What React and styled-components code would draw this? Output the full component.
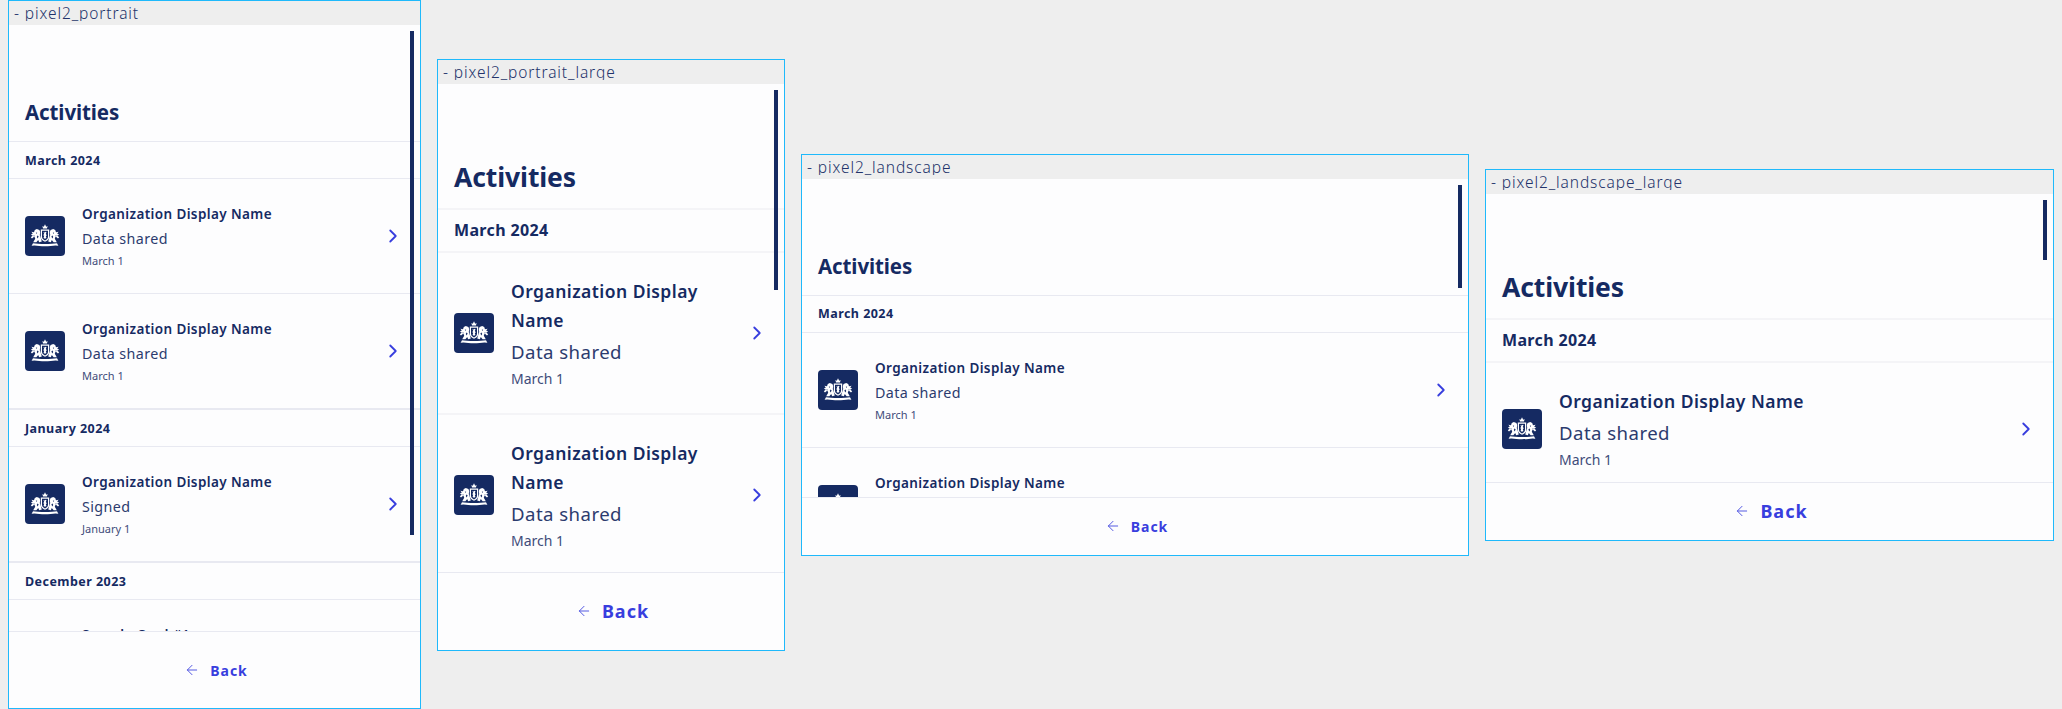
import React from 'react';
import styled, { createGlobalStyle, css } from 'styled-components';
import { ArrowLeft, ChevronRight } from 'lucide-react';

const GlobalStyle = createGlobalStyle`
  html, body {
    margin: 0;
    background: #eeeeee;
    font-family: "Noto Sans", "Open Sans", sans-serif;
    overflow: hidden;
  }
  * { box-sizing: border-box; }
`;

const navy = '#152a62';
const blue = '#383ede';

const Canvas = styled.div`
  height: 709px;
  padding: 0 8px;
  display: flex;
  align-items: center;
  gap: 16px;
`;

const Frame = styled.section`
  flex: none;
  width: ${(p) => p.$width + 2}px;
  border: 1px solid #1fb9fb;
  display: flex;
  flex-direction: column;
`;

const TitleBar = styled.div`
  height: 24px;
  padding-left: 5px;
  background: #eeeeee;
  overflow: hidden;
`;

const TitleText = styled.div`
  height: 20px;
  overflow: hidden;
  font-size: 15.5px;
  line-height: 24px;
  font-weight: 300;
  letter-spacing: 0.9px;
  color: #22326a;
`;

const Screen = styled.div`
  position: relative;
  height: ${(p) => p.$height}px;
  background: #fdfdfe;
  display: flex;
  flex-direction: column;
  overflow: hidden;
`;

const ScrollThumb = styled.div`
  position: absolute;
  top: 6px;
  right: 6px;
  width: 4px;
  height: ${(p) => p.$height}px;
  background: ${navy};
`;

const List = styled.div`
  flex: 1;
  min-height: 0;
  overflow: hidden;
`;

const Header = styled.header`
  height: ${(p) => (p.$large ? 126 : 117)}px;
  padding: 0 16px ${(p) => (p.$large ? 13 : 15)}px;
  display: flex;
  align-items: flex-end;
  border-bottom: ${(p) => (p.$large ? '2px solid #f4f4f7' : '1px solid #e8e9f1')};
`;

const Title = styled.h1`
  margin: 0;
  color: ${navy};
  font-weight: 700;
  font-size: ${(p) => (p.$large ? 26.5 : 20.5)}px;
  line-height: ${(p) => (p.$large ? 36 : 28)}px;
  letter-spacing: -0.1px;
`;

const Section = styled.div`
  ${(p) =>
    !p.$first &&
    css`
      border-top: 2px solid #e8e9f1;
    `}
`;

const SectionHeader = styled.div`
  height: ${(p) => (p.$large ? 43 : 37)}px;
  padding: 0 16px;
  display: flex;
  align-items: center;
  border-bottom: ${(p) => (p.$large ? '2px solid #f4f4f7' : '1px solid #e8e9f1')};
  color: ${navy};
  font-weight: 700;
  font-size: ${(p) => (p.$large ? 16 : 12.5)}px;
  letter-spacing: ${(p) => (p.$large ? 0.35 : 0.45)}px;
`;

const Row = styled.div`
  padding: ${(p) => (p.$large ? '24px 16px 23px' : '24px 16px')};
  display: flex;
  align-items: center;
  border-bottom: ${(p) => (p.$last ? 'none' : p.$large ? '2px solid #f4f4f7' : '1px solid #e8e9f1')};
`;

const LogoBox = styled.div`
  flex: none;
  width: 40px;
  height: 40px;
  border-radius: 4px;
  background: ${navy};
  display: flex;
  align-items: center;
  justify-content: center;
`;

const RowText = styled.div`
  flex: 1;
  min-width: 0;
  margin: 0 16px 0 17px;
`;

const Name = styled.div`
  color: ${navy};
  font-weight: 600;
  font-size: ${(p) => (p.$large ? 17.5 : 13.5)}px;
  line-height: ${(p) => (p.$large ? 29 : 22)}px;
  letter-spacing: ${(p) => (p.$large ? 0.45 : 0.39)}px;
`;

const Description = styled.div`
  color: #2c3b6e;
  font-weight: 400;
  font-size: ${(p) => (p.$large ? 18.6 : 14.3)}px;
  line-height: ${(p) => (p.$large ? 33 : 28)}px;
  letter-spacing: ${(p) => (p.$large ? 0.45 : 0.4)}px;
`;

const DateText = styled.div`
  color: #3f4c7a;
  font-weight: 400;
  font-size: ${(p) => (p.$large ? 14 : 11)}px;
  line-height: ${(p) => (p.$large ? 22 : 16)}px;
`;

const Chevron = styled(ChevronRight)`
  flex: none;
  color: ${blue};
`;

const Footer = styled.footer`
  flex: none;
  height: ${(p) => p.$height}px;
  padding-left: 3px;
  border-top: 1px solid #e8e9f1;
  display: flex;
  align-items: center;
  justify-content: center;
  gap: 10px;
  color: ${blue};
  font-weight: 700;
  font-size: ${(p) => (p.$large ? 18 : 14)}px;
  letter-spacing: 1px;
`;

const BackArrow = styled(ArrowLeft)`
  flex: none;
  opacity: 0.85;
`;

function Crest() {
  return (
    <svg width="30" height="26" viewBox="0 0 30 26" aria-hidden="true">
      <g fill="#fff">
        {/* crown */}
        <path d="M13 5.6 L12.4 3 L13.8 3.8 L15 1.2 L16.2 3.8 L17.6 3 L17 5.6 Z" />
        {/* shield */}
        <path d="M10.8 6.4 H19.2 V14 C19.2 16.6 17 18 15 18.8 C13 18 10.8 16.6 10.8 14 Z" />
        {/* left lion */}
        <path d="M6.8 6 L9.4 7 L10.2 9 L9.8 12 L10.8 15 L11.8 18.6 L9.2 19.2 L8.2 17 L6.4 19.2 L3.2 19.2 L5.2 15.8 L4.4 13.6 L2 15.6 L0.8 14.2 L2.8 12.6 L0.8 11.8 L2.8 10.6 L1.4 8.8 L4 9.2 L4.8 7 Z" />
        {/* right lion */}
        <path d="M23.2 6 L20.6 7 L19.8 9 L20.2 12 L19.2 15 L18.2 18.6 L20.8 19.2 L21.8 17 L23.6 19.2 L26.8 19.2 L24.8 15.8 L25.6 13.6 L28 15.6 L29.2 14.2 L27.2 12.6 L29.2 11.8 L27.2 10.6 L28.6 8.8 L26 9.2 L25.2 7 Z" />
        {/* ribbon */}
        <path d="M3 20.2 C8 21.2 22 21.2 27 20.2 L28.4 22.8 L25.4 22.4 C20 23.4 10 23.4 4.6 22.4 L1.6 22.8 Z" />
      </g>
      <g fill="#152a62">
        {/* shield field */}
        <path d="M12 7.8 H18 V13.8 C18 15.6 16.6 16.6 15 17.4 C13.4 16.6 12 15.6 12 13.8 Z" />
        {/* gaps in the lions */}
        <path d="M5.8 9.4 L7.2 9.8 L6.6 11 Z" />
        <path d="M24.2 9.4 L22.8 9.8 L23.4 11 Z" />
        <path d="M7.4 12.4 L8.6 13.2 L7.8 15.4 L6.8 14 Z" />
        <path d="M22.6 12.4 L21.4 13.2 L22.2 15.4 L23.2 14 Z" />
        <path d="M3.6 12.2 L4.6 12.6 L3.8 13.4 Z" />
        <path d="M26.4 12.2 L25.4 12.6 L26.2 13.4 Z" />
      </g>
      {/* lion on the shield */}
      <path
        fill="#fff"
        d="M13.4 9 L14.6 9.4 L15.4 8.8 L16.6 9.4 L15.8 10.8 L16.8 12.4 L15.8 13 L16.4 15 L15 15.8 L13.6 15 L14.2 12.8 L13.2 12.2 L14.2 10.8 Z"
      />
    </svg>
  );
}

const march = {
  label: 'March 2024',
  items: [
    { name: 'Organization Display Name', description: 'Data shared', date: 'March 1' },
    { name: 'Organization Display Name', description: 'Data shared', date: 'March 1' },
  ],
};

const january = {
  label: 'January 2024',
  items: [{ name: 'Organization Display Name', description: 'Signed', date: 'January 1' }],
};

const december = {
  label: 'December 2023',
  items: [{ name: 'Sample Card #1', description: 'Data shared', date: 'December 1' }],
};

const sections = [march, january, december];

const screens = [
  { title: 'pixel2_portrait', width: 411, height: 683, thumb: 504, footer: 77 },
  { title: 'pixel2_portrait_large', width: 346, height: 566, thumb: 200, footer: 78, large: true },
  { title: 'pixel2_landscape', width: 666, height: 376, thumb: 103, footer: 58 },
  { title: 'pixel2_landscape_large', width: 567, height: 346, thumb: 60, footer: 58, large: true },
];

function ActivityRow({ item, large, last }) {
  return (
    <Row $large={large} $last={last}>
      <LogoBox>
        <Crest />
      </LogoBox>
      <RowText>
        <Name $large={large}>{item.name}</Name>
        <Description $large={large}>{item.description}</Description>
        <DateText $large={large}>{item.date}</DateText>
      </RowText>
      <Chevron size={22} strokeWidth={2} />
    </Row>
  );
}

function ActivitiesScreen({ title, width, height, thumb, footer, large }) {
  return (
    <Frame $width={width}>
      <TitleBar>
        <TitleText>- {title}</TitleText>
      </TitleBar>
      <Screen $height={height}>
        <List>
          <Header $large={large}>
            <Title $large={large}>Activities</Title>
          </Header>
          {sections.map((section, index) => (
            <Section key={section.label} $first={index === 0}>
              <SectionHeader $large={large}>{section.label}</SectionHeader>
              {section.items.map((item, i) => (
                <ActivityRow key={i} item={item} large={large} last={i === section.items.length - 1} />
              ))}
            </Section>
          ))}
        </List>
        <Footer $height={footer} $large={large}>
          <BackArrow size={16} strokeWidth={1.5} />
          <span>Back</span>
        </Footer>
        <ScrollThumb $height={thumb} />
      </Screen>
    </Frame>
  );
}

export default function App() {
  return (
    <>
      <GlobalStyle />
      <Canvas>
        {screens.map((screen) => (
          <ActivitiesScreen key={screen.title} {...screen} />
        ))}
      </Canvas>
    </>
  );
}
